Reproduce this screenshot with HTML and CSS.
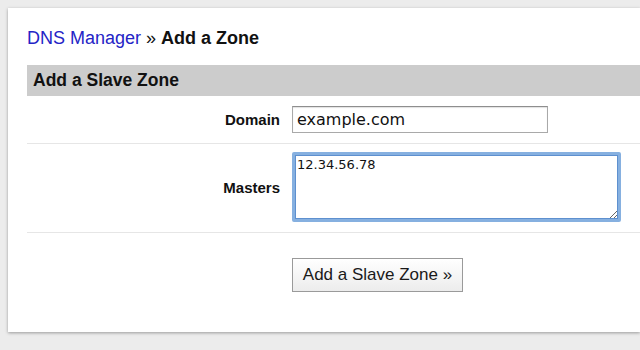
FILE: index.html
```html
<!DOCTYPE html>
<html lang="en">
<head>
<meta charset="utf-8">
<title>DNS Manager » Add a Zone</title>
<link rel="stylesheet" href="styles.css">
</head>
<body>
<div class="panel">
  <h1 class="crumbs"><a class="crumb-link" href="#">DNS Manager</a> » <b>Add a Zone</b></h1>
  <form class="zone-form">
    <h2 class="section-head">Add a Slave Zone</h2>
    <div class="row row-domain">
      <label class="label" for="domain">Domain</label>
      <input class="text-input" id="domain" type="text" value="example.com">
    </div>
    <div class="row row-masters">
      <label class="label" for="masters">Masters</label>
      <textarea class="masters" id="masters">12.34.56.78</textarea>
    </div>
    <div class="row row-submit">
      <span></span>
      <button class="submit" type="button">Add a Slave Zone »</button>
    </div>
  </form>
</div>
</body>
</html>
```
FILE: styles.css
```css
html, body {
  margin: 0;
  padding: 0;
}
body {
  background: #ececec;
  font-family: "Liberation Sans", Arial, sans-serif;
  color: #111;
  height: 350px;
  overflow: hidden;
}
.panel {
  margin: 8px 0 0 8px;
  background: #fff;
  padding: 20px 0 0 19px;
  height: 304px;
  box-shadow: 0 1px 3px rgba(0, 0, 0, 0.35);
}
.crumbs {
  margin: 0 0 16px 0;
  font-size: 18px;
  line-height: 21px;
  font-weight: normal;
}
.crumb-link {
  color: #2424c6;
  text-decoration: none;
}
.crumbs b {
  font-weight: bold;
}
.zone-form {
  margin: 0;
}
.section-head {
  margin: 0;
  background: #cccccc;
  font-size: 17.5px;
  line-height: 31px;
  height: 31px;
  font-weight: bold;
  padding-left: 6px;
  color: #111;
}
.row {
  display: grid;
  grid-template-columns: 253px 1fr;
  column-gap: 12px;
  align-items: center;
  border-bottom: 1px solid #e6e6e6;
}
.row-domain {
  padding: 10px 0;
}
.row-masters {
  padding: 8px 0 10px 0;
}
.row-submit {
  border-bottom: none;
  padding-top: 25px;
}
.label {
  text-align: right;
  font-weight: bold;
  font-size: 15px;
  color: #111;
}
.text-input {
  box-sizing: border-box;
  width: 256px;
  height: 27px;
  margin: 0;
  padding: 0 4px;
  border: 1px solid #a9a9a9;
  border-top-color: #8e8e8e;
  box-shadow: inset 0 1px 1px rgba(0, 0, 0, 0.12);
  font-family: "DejaVu Sans", sans-serif;
  font-size: 16px;
  color: #111;
  background: #fff;
}
.masters {
  box-sizing: border-box;
  display: block;
  width: 329px;
  height: 70px;
  margin: 0;
  padding: 2px 2px;
  border: 3px solid #86b0e0;
  box-shadow: inset 0 0 0 1px #5e90cf;
  border-radius: 2px;
  font-family: "DejaVu Sans", sans-serif;
  font-size: 13px;
  color: #111;
  background: #fff;
  outline: none;
}
.submit {
  justify-self: start;
  box-sizing: border-box;
  width: 171px;
  height: 34px;
  margin: 0;
  padding: 0;
  border: 1px solid #9a9a9a;
  background: linear-gradient(#ffffff, #ececec);
  font-family: "Liberation Sans", Arial, sans-serif;
  font-size: 17px;
  color: #1a1a1a;
  cursor: pointer;
}
```
